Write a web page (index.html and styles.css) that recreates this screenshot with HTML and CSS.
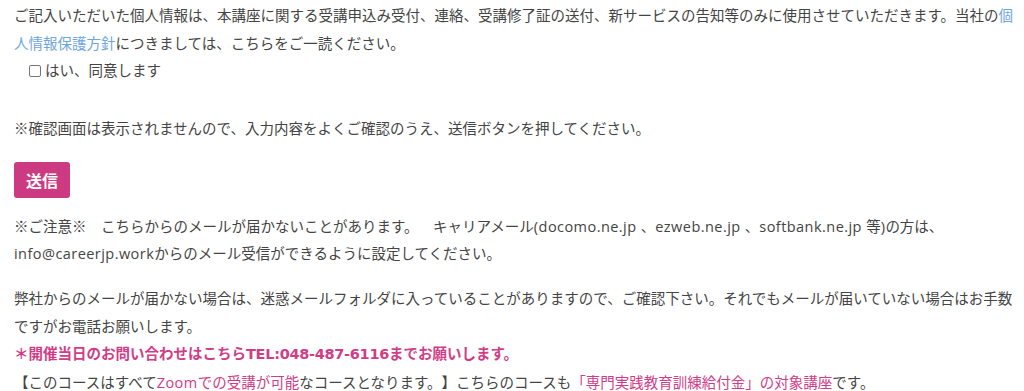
FILE: index.html
```html
<!DOCTYPE html>
<html lang="ja">
<head>
<meta charset="utf-8">
<link rel="stylesheet" href="styles.css">
</head>
<body>
<div class="page">
  <p class="privacy">ご記入いただいた個人情報は、本講座に関する受講申込み受付、連絡、受講修了証の送付、新サービスの告知等のみに使用させていただきます。当社の<a class="link" href="#">個人情報保護方針</a>につきましては、こちらをご一読ください。</p>
  <label class="agree"><span class="box"></span><span>はい、同意します</span></label>
  <p class="confirm">※確認画面は表示されませんので、入力内容をよくご確認のうえ、送信ボタンを押してください。</p>
  <button class="submit" type="button">送信</button>
  <p class="caution">※ご注意※　こちらからのメールが届かないことがあります。　キャリアメール<span class="latin">(docomo.ne.jp </span>、<span class="latin">ezweb.ne.jp </span>、<span class="latin">softbank.ne.jp </span>等<span class="latin">)</span>の方は、<br><span class="latin">info@careerjp.work</span>からのメール受信ができるように設定してください。</p>
  <p class="notice">弊社からのメールが届かない場合は、迷惑メールフォルダに入っていることがありますので、ご確認下さい。それでもメールが届いていない場合はお手数ですがお電話お願いします。<br><strong class="tel">＊開催当日のお問い合わせはこちら<span class="latin-bold">TEL:048-487-6116</span>までお願いします。</strong><br>【このコースはすべて<span class="pink"><span class="latin">Zoom</span>での受講が可能</span>なコースとなります。】こちらのコースも<span class="pink">「専門実践教育訓練給付金」の対象講座</span>です。</p>
</div>
</body>
</html>
```

FILE: styles.css
```css
html, body {
  margin: 0;
  padding: 0;
  background: #ffffff;
}
body {
  font-family: "Open Sans", "Noto Sans CJK JP", sans-serif;
  font-size: 14.5px;
  line-height: 27.5px;
  color: #444444;
  text-spacing-trim: space-all;
}
.page {
  width: 1002px;
  padding: 2px 0 0 14px;
}
p {
  margin: 0;
}
.latin {
  letter-spacing: 0.45px;
}
.latin-bold {
  font-family: "DejaVu Sans", sans-serif;
  letter-spacing: -0.3px;
}
.link {
  color: #6ea6e0;
  text-decoration: none;
}
.agree {
  display: flex;
  align-items: center;
  gap: 4px;
  padding-left: 15px;
  height: 27.5px;
}
.box {
  width: 10px;
  height: 10px;
  border: 1px solid #767676;
  border-radius: 2px;
  background: #fff;
}
.confirm {
  margin-top: 30.5px;
}
.submit {
  display: block;
  margin-top: 19px;
  width: 56px;
  height: 36px;
  border: 0;
  border-radius: 3px;
  background: #cc3b82;
  color: #ffffff;
  font-family: "Noto Sans CJK JP", sans-serif;
  font-weight: 700;
  font-size: 16px;
  padding: 0;
}
.caution {
  margin-top: 15px;
}
.notice {
  margin-top: 17.5px;
}
.tel {
  color: #d13c87;
  font-weight: 700;
}
.pink {
  color: #d13c87;
}
```
